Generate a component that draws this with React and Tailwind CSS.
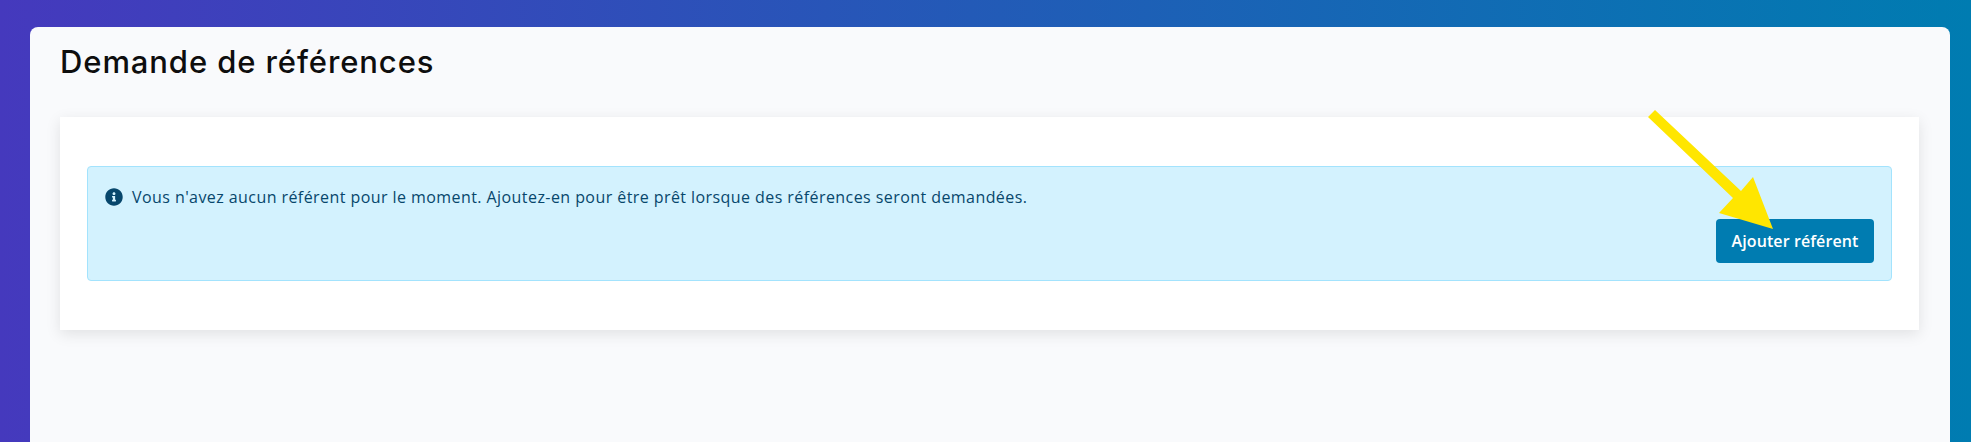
export default function App() {
  return (
    <div className="relative h-[442px] overflow-hidden bg-[linear-gradient(to_right,#4539bd,#007cb1)] pt-[27px] pl-[30px] pr-[21px] font-['Open_Sans',sans-serif]">
      <div className="h-full rounded-t-lg bg-[#f9fafc] pl-[30px] pr-[31px]">
        {/* Page title */}
        <h1 className="pt-[13px] text-[31px] leading-[44px] font-medium tracking-[0.9px] text-[#0e0e0e] font-['Inter',sans-serif]">
          Demande de références
        </h1>

        {/* Card */}
        <div className="mt-[33px] h-[213px] bg-white px-[27px] pt-[49px] shadow-[0_4px_14px_rgba(0,0,0,0.1)]">
          <div className="flex h-[115px] flex-col rounded border border-[#a3e3fd] bg-[#d3f2fe] pl-[17px] pr-[17px] pt-[20px]">
            <div className="flex items-center gap-[9px] text-[16px] leading-[20px] tracking-[0.43px] text-[#07476c]">
              <svg viewBox="0 0 512 512" className="h-[18px] w-[18px] shrink-0" fill="currentColor">
                <path d="M256 8C119 8 8 119 8 256s111 248 248 248 248-111 248-248S393 8 256 8zm0 110c23 0 42 19 42 42s-19 42-42 42-42-19-42-42 19-42 42-42zm56 254c0 7-5 12-12 12h-88c-7 0-12-5-12-12v-24c0-7 5-12 12-12h12v-64h-12c-7 0-12-5-12-12v-24c0-7 5-12 12-12h64c7 0 12 5 12 12v100h12c7 0 12 5 12 12v24z" />
              </svg>
              <span>Vous n'avez aucun référent pour le moment. Ajoutez-en pour être prêt lorsque des références seront demandées.</span>
            </div>
            <div className="mt-[12px] flex justify-end">
              <button className="h-[44px] w-[158px] rounded bg-[#007cb1] text-[16px] font-semibold tracking-[0.1px] text-white">
                Ajouter référent
              </button>
            </div>
          </div>
        </div>
      </div>

      {/* Annotation arrow */}
      <svg className="absolute left-0 top-0 h-[442px] w-[1971px]" viewBox="0 0 1971 442" fill="#ffe600">
        <polygon points="1648,117 1655,110 1741,191 1753,177 1773,229 1719,213 1733,198" />
      </svg>
    </div>
  );
}
